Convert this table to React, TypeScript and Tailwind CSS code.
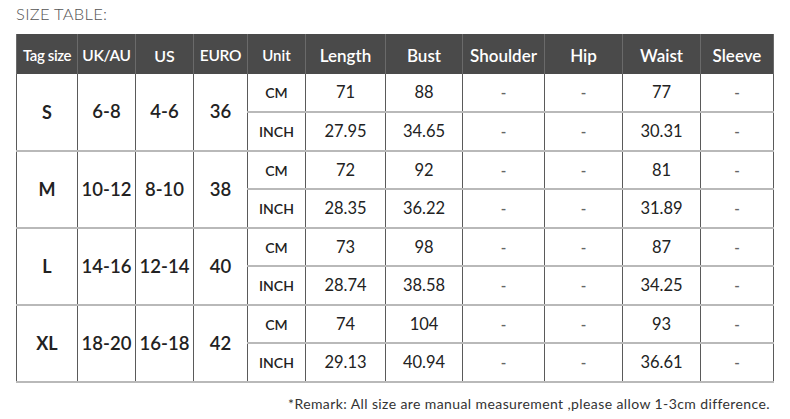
import React from 'react';

interface SizeRow {
  tag: string;
  uk: string;
  us: string;
  euro: string;
  cm: string[];
  inch: string[];
}

const headers = ['Tag size', 'UK/AU', 'US', 'EURO', 'Unit', 'Length', 'Bust', 'Shoulder', 'Hip', 'Waist', 'Sleeve'];
const widths = ['w-[61px]', 'w-[58px]', 'w-[58px]', 'w-[54px]', 'w-[58px]', 'w-[80px]', 'w-[77px]', 'w-[82px]', 'w-[78px]', 'w-[78px]', 'w-[73px]'];
const headSizes = ['text-[15px] tracking-[-0.4px]', 'text-[15.5px] tracking-[-0.3px]', 'text-[16px]', 'text-[15.5px] tracking-[-0.3px]', 'text-[15px]', 'text-[17px]', 'text-[17px]', 'text-[17px]', 'text-[17px]', 'text-[17px]', 'text-[17px]'];

const rows: SizeRow[] = [
  { tag: 'S', uk: '6-8', us: '4-6', euro: '36', cm: ['71', '88', '-', '-', '77', '-'], inch: ['27.95', '34.65', '-', '-', '30.31', '-'] },
  { tag: 'M', uk: '10-12', us: '8-10', euro: '38', cm: ['72', '92', '-', '-', '81', '-'], inch: ['28.35', '36.22', '-', '-', '31.89', '-'] },
  { tag: 'L', uk: '14-16', us: '12-14', euro: '40', cm: ['73', '98', '-', '-', '87', '-'], inch: ['28.74', '38.58', '-', '-', '34.25', '-'] },
  { tag: 'XL', uk: '18-20', us: '16-18', euro: '42', cm: ['74', '104', '-', '-', '93', '-'], inch: ['29.13', '40.94', '-', '-', '36.61', '-'] },
];

const cell = 'border-x border-x-[#5a5a5a] border-b-2 border-b-[#b9b9b9] text-center p-0';

const Value: React.FC<{ v: string }> = ({ v }) => (
  <td className={`${cell} ${v === '-' ? 'text-[15px] text-[#666] font-semibold' : 'text-[16.5px] text-[#222]'}`}>{v}</td>
);

const App: React.FC = () => {
  return (
    <div className="w-[790px] h-[419px] bg-white relative font-['Lato','Open_Sans',sans-serif]">
      <div className="pt-[4px] pl-[16px] text-[16.5px] text-[#555] tracking-[0.3px] font-light leading-[20px]">SIZE TABLE:</div>
      <table className="ml-[16px] mt-[10px] border-collapse table-fixed w-[757px] border-l border-l-[#5a5a5a]">
        <thead>
          <tr className="h-[40px] bg-[#4a4a4a] text-white">
            {headers.map((h, i) => (
              <th key={h} className={`${widths[i]} p-0 pt-[3px] border-x border-x-[#6a6a6a] font-semibold ${headSizes[i]}`}>{h}</th>
            ))}
          </tr>
        </thead>
        <tbody>
          {rows.map(r => (
            <React.Fragment key={r.tag}>
              <tr className="h-[38px]">
                <td rowSpan={2} className={`${cell} text-[18px] font-bold text-[#222]`}>{r.tag}</td>
                <td rowSpan={2} className={`${cell} text-[18.5px] font-semibold text-[#222]`}>{r.uk}</td>
                <td rowSpan={2} className={`${cell} text-[18.5px] font-semibold text-[#222]`}>{r.us}</td>
                <td rowSpan={2} className={`${cell} text-[18.5px] font-semibold text-[#222]`}>{r.euro}</td>
                <td className={`${cell} text-[14px] font-semibold text-[#222] align-top pt-[8px]`}>CM</td>
                {r.cm.map((v, i) => <Value key={i} v={v} />)}
              </tr>
              <tr className="h-[39px]">
                <td className={`${cell} text-[14px] font-semibold text-[#222] align-top pt-[8px]`}>INCH</td>
                {r.inch.map((v, i) => <Value key={i} v={v} />)}
              </tr>
            </React.Fragment>
          ))}
        </tbody>
      </table>
      <div className="absolute right-[20px] bottom-[5px] text-[14px] text-[#333] tracking-[0.4px]">*Remark: All size are manual measurement ,please allow 1-3cm difference.</div>
    </div>
  );
};

export default App;
